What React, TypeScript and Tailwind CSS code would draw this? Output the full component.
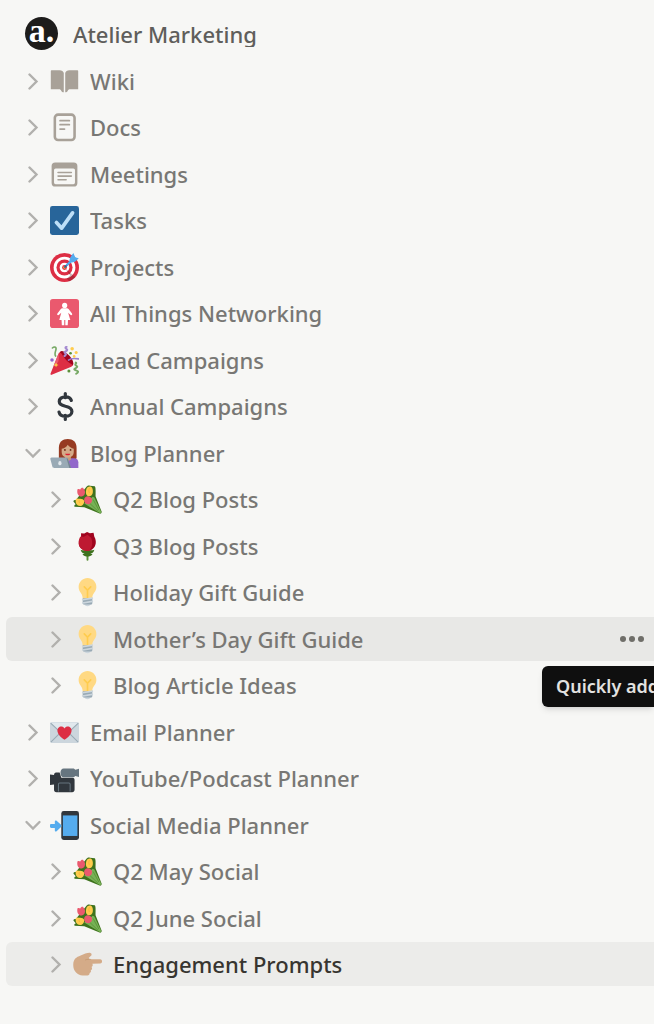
import React from 'react';
import clsx from 'clsx';

// ---------- Icons ----------

const Emoji: React.FC<{ children: React.ReactNode }> = ({ children }) => (
  <svg viewBox="0 0 36 36" className="size-[29px] shrink-0" fill="none" aria-hidden="true">
    {children}
  </svg>
);

const Book = () => (
  <Emoji>
    <path fill="#a8a198" d="M1 5.200C1 4.500 1.500 4 2.200 4H12c2.600 0 4.700 1.400 5.100 3.600V31.300c-1.500 0-2.600-.6-3-1.600-.5-1.400-1.400-2-3-2H1zM35 5.200c0-.7-.5-1.200-1.200-1.200H24c-2.600 0-4.700 1.400-5.100 3.600v23.700c1.500 0 2.600-.6 3-1.600.5-1.400 1.400-2 3-2H35z" />
  </Emoji>
);

const Doc = () => (
  <Emoji>
    <rect x="6" y="2" width="24.500" height="31.500" rx="4" stroke="#a8a198" strokeWidth="3.200" />
    <path d="M12.500 9.500h11.500M12.500 14.500h11.500M12.500 20h5.500" stroke="#a8a198" strokeWidth="2.200" strokeLinecap="round" />
  </Emoji>
);

const Agenda = () => (
  <Emoji>
    <path fill="#a8a198" fillRule="evenodd" d="M6.500 3h23a4.500 4.500 0 0 1 4.500 4.500v21a4.500 4.500 0 0 1-4.500 4.500h-23A4.500 4.500 0 0 1 2 28.500v-21A4.500 4.500 0 0 1 6.500 3zM7 10.500a2 2 0 0 0-2 2V28a2 2 0 0 0 2 2h22a2 2 0 0 0 2-2V12.500a2 2 0 0 0-2-2z" />
    <path d="M10 15.500h16.500M10 20h16.500M10 24.500h10" stroke="#a8a198" strokeWidth="2" strokeLinecap="round" />
  </Emoji>
);

const CheckBox = () => (
  <Emoji>
    <rect width="36" height="36" rx="3" fill="#28659a" />
    <path d="M8 20.500l6.500 7L28 8.500" stroke="#bddff8" strokeWidth="4.600" strokeLinecap="round" strokeLinejoin="round" />
  </Emoji>
);

const Target = () => (
  <Emoji>
    <circle cx="18" cy="18" r="18" fill="#dd2e44" />
    <circle cx="18" cy="18" r="13.500" fill="#fff" />
    <circle cx="18" cy="18" r="10" fill="#dd2e44" />
    <circle cx="18" cy="18" r="6" fill="#fff" />
    <circle cx="18" cy="18" r="3" fill="#dd2e44" />
    <path d="M18.500 18.500l13 11.500c-2 2.300-5 4.300-8 5.200L21 31.500l4-3.500z" fill="#58101c" opacity=".3" />
    <circle cx="18" cy="18" r="1.600" fill="#ffac33" />
    <path d="M18.500 17.500L28 8" stroke="#269" strokeWidth="2" strokeLinecap="round" />
    <path d="M20.500 15.500L31 5" stroke="#55acee" strokeWidth="2.800" />
    <path fill="#55acee" d="M24.500 11.500c-.8-3 .3-5.500 2-8L29 0l2 4.500L28.500 9zM25 11.500c3 .8 5.300 0 7.500-1.800L35.700 6.500 31 5.200 27 8z" />
  </Emoji>
);

const Womens = () => (
  <Emoji>
    <rect width="36" height="36" rx="3.500" fill="#ea596e" />
    <circle cx="18.200" cy="8" r="3.200" fill="#fff" />
    <path fill="#fff" d="M15.500 11.500h5.500c1 0 1.700.5 2.300 1.200l4 5.300c1 1.500-.8 2.800-2 1.600L22.500 17l2.700 9H11.500L14 17l-2.800 2.600c-1.300 1.200-3-.1-2-1.600l4-5.300c.6-.7 1.300-1.200 2.300-1.200zM14.300 25.500h3.400v7h-3zM19 25.500h3.400l-.4 7h-3z" />
  </Emoji>
);

const Popper = () => (
  <Emoji>
    <ellipse cx="20.500" cy="15.500" rx="5" ry="11.500" transform="rotate(-42 20.500 15.500)" fill="#a0041e" />
    <path fill="#dd2e44" d="M.6 34.400L10.500 9.500c1-2.500 3.200-1.500 5.500 2.500 3 5 7 9 11.500 11 1.500 1 .3 2.200-1 2.700L2 35.800c-1 .3-1.800-.4-1.400-1.400z" />
    <path fill="#ea596e" d="M4 26l6.500-16.500c1 5 .5 9-1.500 12z" />
    <path d="M3 2.500C5 .5 8 1 7.500 4c-.4 3-2.500 5.500-.5 8.500" stroke="#77a965" strokeWidth="2" strokeLinecap="round" />
    <path d="M20.500 1c-4 1.500 3 3 0 5s-3 1.500-1.500 3 .5 2-1 3.500" stroke="#a58bd0" strokeWidth="2.600" strokeLinecap="round" />
    <path d="M23 17.500c3-2.500 7-2.500 12.500-1.500" stroke="#9b7fd0" strokeWidth="2" strokeLinecap="round" />
    <path d="M32 20.500c2 1-2 2 0 3.500s3 2 0 3.500-2 2 1 3 2 2.500-.5 4" stroke="#77a965" strokeWidth="2.400" strokeLinecap="round" />
    <circle cx="27.500" cy="3.500" r="2.200" fill="#ffcc4d" />
    <circle cx="32.500" cy="8" r="1.900" fill="#ffcc4d" />
    <circle cx="30" cy="13" r="1.700" fill="#ffcc4d" />
    <circle cx="25.500" cy="9" r="1.700" fill="#5c913b" />
    <circle cx="23.500" cy="31" r="1.900" fill="#5c913b" />
    <circle cx="2.500" cy="17.500" r="2.200" fill="#9266cc" />
    <path fill="#ffcc4d" d="M7.500 20.500l1 2 2.200 1-2.200 1-1 2-1-2-2-1 2-1z" />
  </Emoji>
);

const Dollar = () => (
  <Emoji>
    <path
      d="M19 2v5M19 29v5M26.500 10.500c-.8-2.800-3.500-4.500-7.300-4.500-4.700 0-7.700 2.300-7.700 5.700 0 3.800 3.500 5 7.700 6 4.700 1 8 2.500 8 6.400 0 3.700-3.300 6-8 6-4.500 0-7.400-2-8-5.200"
      stroke="#31373d"
      strokeWidth="4"
      strokeLinecap="round"
    />
  </Emoji>
);

const Technologist = () => (
  <Emoji>
    <path fill="#963b22" d="M11 25V11C11 4 15.500 0 22 0s11 4 11 11v12c0 2-1.500 2.500-4 2.500z" />
    <path fill="#9268ca" d="M22 24h8c3 0 5.200 2 5.200 5v7H22z" />
    <path fill="#c99a79" d="M18.500 20h7.500v5.500c-2 2-5.500 2-7.500 0z" />
    <path fill="#d4ab88" d="M14.500 12c4-.5 6-2.500 7.500-5 2 3 4.500 4 7.500 5v4c0 4.500-3.500 7-7.500 7s-7.500-2.500-7.500-7z" />
    <circle cx="18.500" cy="13.500" r="1.100" fill="#662113" />
    <circle cx="25.500" cy="13.500" r="1.100" fill="#662113" />
    <path fill="#df1f32" d="M18.700 18.300h6.600c-.8 2.600-5.800 2.600-6.600 0z" />
    <path fill="#99aab5" d="M.5 25c-.3-1 .3-2 1.500-2h18c1 0 2 .6 2.300 1.500L25.500 36H5c-1 0-1.800-.6-2-1.500z" />
    <path fill="#738592" d="M24 36l-3.500-12 1.500.3L26.200 36z" />
    <ellipse cx="12.300" cy="30" rx="2" ry="2.700" fill="#e1e8ed" />
  </Emoji>
);

const Bouquet = () => (
  <Emoji>
    <path fill="#3e721d" d="M17 2c1-1.500 3-2 4-1l6 .5c1.500 1 1 8 1 12.500L35.500 33c.5 1.500-1 3-2.500 2.500L14 27.500 2 27c-1-1 0-2.500 1.500-3l-3-3.500c0-1.500 1.500-2 3-2z" />
    <path fill="#77b255" d="M14 23l10.500-8.500 2 1L34.800 33c.4 1.300-.4 2.200-1.700 1.700z" />
    <path d="M20 22l11 10.500M25 18l7 13" stroke="#5c913b" strokeWidth="1.100" />
    <path fill="#ea596e" d="M5.500 5.500C6.500 4.300 8 5 9 5.500c.5-1.500 2-2.300 3.500-2 .2 1 1 1.500 1.700 2.500 1.500 3 .8 7.500-3.200 8.300-4 .7-6.500-3.800-5.500-8.800z" />
    <path fill="#ffcc4d" d="M17 4c1-1.200 2.200-1.500 3.500-2 1.500-.2 3 .5 3.500 2 1.500 4 .8 10-4 10-4 0-5-5-3-10z" />
    <path fill="#ffcc4d" d="M3.500 17.500c1.500-1.300 3.500-.8 4.500-.3 2-.4 5 .3 6 2.800 0 3.700-2 6.200-5.200 6.200-4 0-6.300-4-5.300-8.700z" />
    <path fill="#ea596e" d="M14 17c.8-2 2.500-3.300 4.500-3 1.500.3 4 1 5 3 .8 4-1.500 6.800-4.800 6.800-3.500 0-5.500-3.300-4.700-6.800z" />
    <path d="M20.500 4c-1.200 2.500-1.200 4 0 6M8 18.500c-1 2-.5 3.500 1 4.500" stroke="#ffac33" strokeWidth=".9" />
  </Emoji>
);

const Rose = () => (
  <Emoji>
    <path d="M18 22v12.500" stroke="#5c913b" strokeWidth="2.400" strokeLinecap="round" />
    <path fill="#3e721d" d="M9.500 22c2 1 5 .5 8.500.5s6.500.5 8.500-.5c-.5 3-2.500 4.500-5 4.800 1 .7 2 .7 3 .2-1.500 3-4.500 3.500-6.500 3.500s-5-.5-6.500-3.500c1 .5 2 .5 3-.2-2.500-.3-4.500-1.800-5-4.800z" />
    <path fill="#a0041e" d="M10 1.500l4 .5 3.500-2 3.500 1.500 4.500-.5 1 5c3 5 2.500 12-2.500 15.500-4 2.500-8.500 2.500-12.500 0C6.500 18 6 11.500 10 7z" />
    <path fill="#be1931" d="M8.500 5.500l5 .5L18 3.500l4.500 3.500c2.500 6 1.500 12.500-2.500 16.500-5 .5-9.500-1-12-5.500-2-4-1-8.500 1-12.500z" />
  </Emoji>
);

const Bulb = () => (
  <Emoji>
    <path fill="#ffd983" d="M29 11.060c0 6.439-5 7.439-5 13.440 0 3.098-3.123 3.359-5.500 3.359-2.053 0-6.586-.779-6.586-3.361C11.914 18.500 7 17.500 7 11.060 7 5.029 12.285.14 18.083.14 23.883.14 29 5.029 29 11.060z" />
    <path fill="#ccd6dd" d="M22.167 32.500c0 .828-2.234 2.500-4.167 2.500-1.933 0-4.167-1.672-4.167-2.500 0-.828 2.233-.5 4.167-.5 1.933 0 4.167-.328 4.167.5z" />
    <path fill="#ffcc4d" d="M22.707 10.293c-.391-.391-1.023-.391-1.414 0L18 13.586l-3.293-3.293c-.391-.391-1.023-.391-1.414 0s-.391 1.023 0 1.414L17 15.414V26c0 .553.447 1 1 1s1-.447 1-1V15.414l3.707-3.707c.391-.391.391-1.023 0-1.414z" />
    <path fill="#99aab5" d="M24 31c0 1.104-.896 2-2 2h-8c-1.104 0-2-.896-2-2v-6h12z" />
    <path d="M12 31l12-2M12 27l12-2" stroke="#ccd6dd" strokeWidth="2" strokeLinecap="round" />
  </Emoji>
);

const LoveLetter = () => (
  <Emoji>
    <rect y="5" width="36" height="26" rx="2.500" fill="#ccd6dd" />
    <path fill="#e1e8ed" d="M1 5.500h34L20 20c-1.200 1-2.800 1-4 0z" />
    <path d="M.8 6.500L16 20.500c1.200 1 2.800 1 4 0l15.200-14M1 30l11-11M35 30L24 19" stroke="#99aab5" strokeWidth="1.300" />
    <path fill="#dd2e44" d="M18 13c1.500-2.500 4-3 6-2 3 1.500 3.500 5 2 8-1.500 3.500-5 6.500-8 8-3-1.500-6.500-4.500-8-8-1.500-3-1-6.500 2-8 2-1 4.500-.5 6 2z" />
  </Emoji>
);

const Camera = () => (
  <Emoji>
    <path fill="#31373d" d="M0 13l5 .5c0-1.700 1-3 2.500-3H12L14 17h14c1.500 0 2.500 1 2.500 2.500V32c0 1.800-1.200 3-3 3H8c-2 0-3-1-3-3v-6.500l-5 .5z" />
    <path d="M10.500 34V25c0-1 .5-1.500 1.500-1.500h11.500c1 0 1.500.5 1.500 1.500v9" stroke="#66757f" strokeWidth="1.300" />
    <path fill="#66757f" d="M17 5.500h12.500L31.500 7l4.500-1v10l-4.500-1-2 1.500H17c-2.500 0-4-2-4-5.500s1.500-5.500 4-5.500z" />
  </Emoji>
);

const PhoneArrow = () => (
  <Emoji>
    <rect x="14" width="22" height="36" rx="3" fill="#31373d" />
    <path fill="#55acee" d="M16 5.500h18v25.500H16z" />
    <path fill="#55acee" d="M0 17.500C0 16.700.6 16 1.500 16H6v-3c0-1.300 1.200-1.700 2.200-.8l5.500 5c.8.9.8 1.900 0 2.800l-5.500 5c-1 1-2.200.5-2.200-.8v-3H1.500c-.9 0-1.500-.7-1.500-1.500z" />
  </Emoji>
);

const PointRight = () => (
  <Emoji>
    <path fill="#d4ab88" d="M21.500 3.600c2 .2 2 3 .5 4L19.500 10l1.500 1.500h12.800c3 0 3 5.300 0 5.300L24 17c1 1.500.5 3.500-1 4 1.200 1.500.8 3.500-1 4.200.8 1.500 0 3-1.500 3.300.5 1.500-.7 3-2.500 3H12C5 31 .3 26 .3 18.500S4 9 9.500 6.800C14 5 18 3.200 21.500 3.600z" />
    <path d="M15 12.500c2-1 5-1 7.500-.8" stroke="#b78b60" strokeWidth=".6" />
  </Emoji>
);

const Chevron: React.FC<{ open?: boolean }> = ({ open }) => (
  <svg viewBox="0 0 18 18" className="size-[18px]" fill="none" stroke="#b1b0ad" strokeWidth="2.400" aria-hidden="true">
    <path d={open ? 'M2.500 6L9 12.500 15.500 6' : 'M5.500 2.500L12.500 9.500l-7 7'} strokeLinecap="round" />
  </svg>
);

// ---------- Data ----------

interface Page {
  title: string;
  icon: React.FC;
  child?: boolean;
  open?: boolean;
  state?: 'hover' | 'active';
}

const PAGES: Page[] = [
  { title: 'Wiki', icon: Book },
  { title: 'Docs', icon: Doc },
  { title: 'Meetings', icon: Agenda },
  { title: 'Tasks', icon: CheckBox },
  { title: 'Projects', icon: Target },
  { title: 'All Things Networking', icon: Womens },
  { title: 'Lead Campaigns', icon: Popper },
  { title: 'Annual Campaigns', icon: Dollar },
  { title: 'Blog Planner', icon: Technologist, open: true },
  { title: 'Q2 Blog Posts', icon: Bouquet, child: true },
  { title: 'Q3 Blog Posts', icon: Rose, child: true },
  { title: 'Holiday Gift Guide', icon: Bulb, child: true },
  { title: 'Mother’s Day Gift Guide', icon: Bulb, child: true, state: 'hover' },
  { title: 'Blog Article Ideas', icon: Bulb, child: true },
  { title: 'Email Planner', icon: LoveLetter },
  { title: 'YouTube/Podcast Planner', icon: Camera },
  { title: 'Social Media Planner', icon: PhoneArrow, open: true },
  { title: 'Q2 May Social', icon: Bouquet, child: true },
  { title: 'Q2 June Social', icon: Bouquet, child: true },
  { title: 'Engagement Prompts', icon: PointRight, child: true, state: 'active' },
];

const PageRow: React.FC<{ page: Page }> = ({ page }) => {
  const { title, icon: Icon, child, open, state } = page;

  return (
    <li
      className={clsx(
        'relative flex h-11 items-center rounded-l-md odd:mb-[2px] even:mb-[3px]',
        child ? 'pl-[41px]' : 'pl-[18px]',
        state === 'hover' && 'bg-[#e8e8e6]',
        state === 'active' && 'bg-[#ececea]'
      )}
    >
      <button type="button" aria-label={`Toggle ${title}`} aria-expanded={!!open} className="mr-2 shrink-0">
        <Chevron open={open} />
      </button>
      <a
        href="#"
        className={clsx(
          'flex min-w-0 flex-1 items-center gap-[11px]',
          state === 'active' ? 'text-[#373530]' : 'text-[#787774]'
        )}
      >
        <Icon />
        <span className="truncate">{title}</span>
      </a>

      {state === 'hover' && (
        <>
          <button type="button" aria-label="More" className="mr-[9px] shrink-0">
            <svg viewBox="0 0 26 8" className="h-2 w-[26px]" fill="#6f6e69" aria-hidden="true">
              <circle cx="4" cy="4" r="3" />
              <circle cx="13" cy="4" r="3" />
              <circle cx="22" cy="4" r="3" />
            </svg>
          </button>
          {/* tooltip runs off the edge of the sidebar */}
          <div
            role="tooltip"
            className="absolute top-[49px] right-0 z-10 w-28 overflow-hidden rounded-l-md bg-[#0f0f0f] py-1.5 pl-3.5 text-[18px] leading-[29px] font-semibold whitespace-nowrap text-[#e3e2e0] shadow-md"
          >
            Quickly add
          </div>
        </>
      )}
    </li>
  );
};

const App: React.FC = () => {
  return (
    <nav className="min-h-screen overflow-hidden bg-[#f7f7f5] pt-[17px] pl-1.5 font-['Noto_Sans',sans-serif] text-[22px] leading-8 font-medium">
      <header className="mb-[9px] flex items-center gap-[15px] pl-[19px]">
        <div className="flex size-[33px] shrink-0 items-center justify-center rounded-full bg-[#1d1c1b] pb-1.5 font-['Liberation_Serif',serif] text-[34px] leading-none font-bold text-white">
          a.
        </div>
        <h1 className="overflow-hidden leading-[26px] text-[#5f5e5b]">Atelier Marketing</h1>
      </header>

      <ul>
        {PAGES.map((page) => (
          <PageRow key={page.title} page={page} />
        ))}
      </ul>
    </nav>
  );
};

export default App;
